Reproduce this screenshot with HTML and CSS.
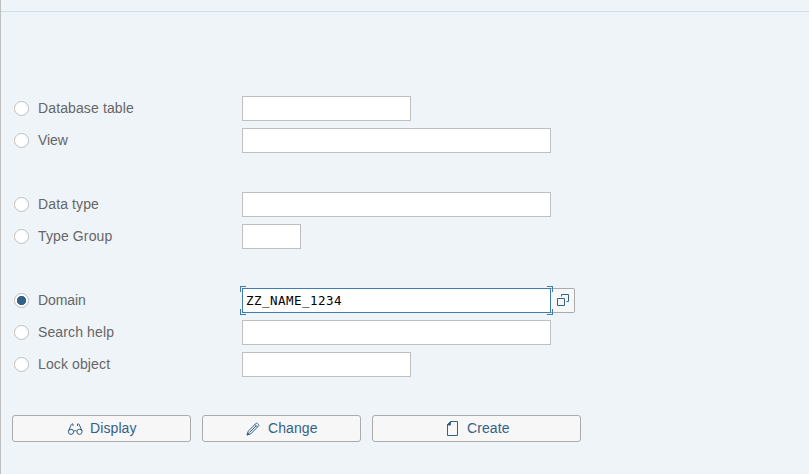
FILE: index.html
```html
<!DOCTYPE html>
<html lang="en">
<head>
<meta charset="utf-8">
<title>Dictionary</title>
<link rel="stylesheet" href="styles.css">
</head>
<body>
<div class="toolbar"></div>
<main class="screen">
  <form class="objects">
    <div class="row"><span class="radio"></span><span class="label">Database table</span><div class="field medium"></div></div>
    <div class="row"><span class="radio"></span><span class="label tight">View</span><div class="field long"></div></div>
    <div class="row group"><span class="radio"></span><span class="label">Data type</span><div class="field long"></div></div>
    <div class="row"><span class="radio"></span><span class="label">Type Group</span><div class="field short"></div></div>
    <div class="row group"><span class="radio checked"></span><span class="label tight">Domain</span><div class="field long focused">ZZ_NAME_1234<i class="corner tl"></i><i class="corner tr"></i><i class="corner bl"></i><i class="corner br"></i></div><div class="value-help"><svg width="14" height="14" viewBox="0 0 14 14"><path d="M1.500 5.500h7v7h-7zM5.500 3.500v-2h7v7h-2" /></svg></div></div>
    <div class="row"><span class="radio"></span><span class="label">Search help</span><div class="field long"></div></div>
    <div class="row"><span class="radio"></span><span class="label">Lock object</span><div class="field medium"></div></div>
  </form>
  <div class="actions">
    <div class="button display"><svg width="16" height="14" viewBox="0 0 16 14"><circle cx="4" cy="9.800" r="2.600"/><circle cx="12.500" cy="9.800" r="2.600"/><path d="M6.600 9.200q1.600-1.200 3.300 0M1.500 9L4.300 2.500q.4-1 1.700-.5V4M15 9L12.200 2.500q-.4-1-1.700-.5V4"/></svg><span>Display</span></div>
    <div class="button change"><svg width="14" height="14" viewBox="0 0 14 14"><path d="M1.200 12.800l1-3.600L10.200 1.300q.5-.5 1 0l1.500 1.500q.5.500 0 1L4.800 11.800zM9 2.500l2.500 2.500M10 4L3.500 10.500"/><path class="solid" d="M1 13l.7-2.200 1.500 1.500z"/></svg><span>Change</span></div>
    <div class="button create"><svg width="12" height="16" viewBox="0 0 12 16"><path d="M4.500 1.500h7v14h-10v-11z"/><path class="solid" d="M4.500 1.500v3.500h-3.500z"/></svg><span>Create</span></div>
  </div>
</main>
</body>
</html>
```
FILE: styles.css
```css
* { box-sizing: border-box; }
body {
  margin: 0;
  height: 474px;
  overflow: hidden;
  background: #eff4f8;
  border-left: 1px solid #bfbfbf;
  color: #666;
  font: 14px/25px "Liberation Sans", Arial, sans-serif;
}
.toolbar { height: 12px; border-bottom: 1px solid #cbdeeb; }
.screen { padding: 84px 0 0 11px; }
.row { display: flex; align-items: center; height: 25px; margin-bottom: 7px; }
.group { margin-top: 39px; }
.radio {
  width: 15px;
  height: 15px;
  margin-left: 2px;
  border: 1px solid #bfbfbf;
  border-radius: 50%;
  background: #fff;
}
.checked { background: radial-gradient(circle, #346187 4.300px, #fff 5px); }
.label { width: 204px; margin-left: 9px; letter-spacing: .12px; }
.label.tight { letter-spacing: -.1px; }
.field {
  position: relative;
  height: 25px;
  border: 1px solid #bfbfbf;
  background: #fff;
}
.short { width: 59px; }
.medium { width: 169px; }
.long { width: 309px; }
.focused {
  padding-left: 3px;
  border-color: #427cac;
  color: #000;
  font: 12.500px/24px "DejaVu Sans Mono", monospace;
  letter-spacing: .48px;
}
.corner { position: absolute; width: 6px; height: 6px; border: 0 solid #427cac; }
.tl { top: -3px; left: -3px; border-width: 1px 0 0 1px; }
.tr { top: -3px; right: -3px; border-width: 1px 1px 0 0; }
.bl { bottom: -3px; left: -3px; border-width: 0 0 1px 1px; }
.br { bottom: -3px; right: -3px; border-width: 0 1px 1px 0; }
.value-help {
  display: flex;
  align-items: flex-start;
  width: 24px;
  height: 25px;
  padding: 4px 0 0 5px;
  border: 1px solid #ababab;
  border-left: 0;
  border-radius: 0 2px 2px 0;
  background: #f7f7f7;
}
svg { flex: none; fill: none; stroke: #346187; stroke-width: 1; }
.solid { fill: #346187; }
.actions { display: flex; margin-top: 38px; }
.button {
  display: flex;
  align-items: center;
  height: 27px;
  border: 1px solid #ababab;
  border-radius: 3px;
  background: #f7f7f7;
  color: #346187;
  letter-spacing: .1px;
}
.display { width: 179px; margin-right: 11px; padding-left: 54px; gap: 7px; }
.change { width: 159px; margin-right: 11px; padding-left: 43px; gap: 8px; }
.create { width: 209px; padding-left: 73px; gap: 9px; }
.create svg { margin-top: -2px; }
```
